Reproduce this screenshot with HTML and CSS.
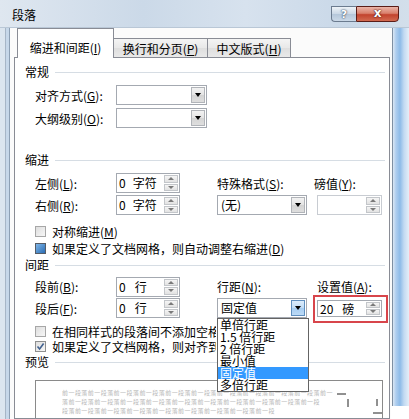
FILE: index.html
```html
<!DOCTYPE html>
<html lang="zh">
<head>
<meta charset="utf-8">
<link rel="stylesheet" href="styles.css">
</head>
<body>
<div class="win">
  <div class="titlebar">
    <span class="title">段落</span>
    <div class="tbtns">
      <span class="help">?</span>
      <span class="close">x</span>
    </div>
  </div>
  <div class="frame">
    <div class="lframe"></div>
    <div class="face">
      <div class="tabs">
        <div class="tab active w1">缩进和间距(<u>I</u>)</div>
        <div class="tab w2">换行和分页(<u>P</u>)</div>
        <div class="tab w3">中文版式(<u>H</u>)</div>
      </div>
      <div class="panel">
        <div class="grp first">常规</div>
        <div class="row r1">
          <span>对齐方式(<u>G</u>):</span>
          <div class="combo"><span class="v"></span><span class="btn"><i></i></span></div>
        </div>
        <div class="row r2">
          <span>大纲级别(<u>O</u>):</span>
          <div class="combo"><span class="v"></span><span class="btn"><i></i></span></div>
        </div>

        <div class="grp g-indent">缩进</div>
        <div class="grid indent">
          <span>左侧(<u>L</u>):</span>
          <div class="spin"><span class="v">0<b>字符</b></span><span class="arr"><em class="up"></em><em class="dn"></em></span></div>
          <span></span>
          <span>特殊格式(<u>S</u>):</span>
          <span></span>
          <span class="lbl-shift">磅值(<u>Y</u>):</span>

          <span>右侧(<u>R</u>):</span>
          <div class="spin"><span class="v">0<b>字符</b></span><span class="arr"><em class="up"></em><em class="dn"></em></span></div>
          <span></span>
          <div class="combo"><span class="v">(无)</span><span class="btn"><i></i></span></div>
          <span></span>
          <div class="spin dis"><span class="v"></span><span class="arr"><em class="up"></em><em class="dn"></em></span></div>
        </div>
        <div class="chk c1"><span class="box dim"></span><span>对称缩进(<u>M</u>)</span></div>
        <div class="chk c2"><span class="box ind"><span></span></span><span>如果定义了文档网格，则自动调整右缩进(<u>D</u>)</span></div>

        <div class="grp g-space">间距</div>
        <div class="grid space">
          <span>段前(<u>B</u>):</span>
          <div class="spin"><span class="v">0<b class="hang">行</b></span><span class="arr"><em class="up"></em><em class="dn"></em></span></div>
          <span></span>
          <span>行距(<u>N</u>):</span>
          <span></span>
          <span>设置值(<u>A</u>):</span>

          <span>段后(<u>F</u>):</span>
          <div class="spin"><span class="v">0<b class="hang">行</b></span><span class="arr"><em class="up"></em><em class="dn"></em></span></div>
          <span></span>
          <div class="combo open">
            <span class="v">固定值</span><span class="btn hot"><i></i></span>
            <ul class="list">
              <li>单倍行距</li>
              <li>1.5 倍行距</li>
              <li>2 倍行距</li>
              <li>最小值</li>
              <li class="sel">固定值</li>
              <li>多倍行距</li>
            </ul>
          </div>
          <span></span>
          <div class="spin small hl"><span class="v">20<b class="pt">磅</b></span><span class="arr"><em class="up"></em><em class="dn"></em></span><span class="mark"></span></div>
        </div>
        <div class="chk c3"><span class="box dim"></span><span class="clip">在相同样式的段落间不添加空格(<u>C</u>)</span></div>
        <div class="chk c4"><span class="box"><svg width="9" height="9" viewBox="0 0 9 9"><path d="M1.5 4.5 L3.6 7 L7.6 1.6" fill="none" stroke="#41618f" stroke-width="1.6"/></svg></span><span class="clip">如果定义了文档网格，则对齐到网格(<u>W</u>)</span></div>

        <div class="grp g-prev">预览</div>
        <div class="preview">
          <p>前一段落前一段落前一段落前一段落前一段落前一段落前一段落前一段落前一段落前一段落前一</p>
          <p>落前一段落前一段落前一段落前一段落前一段落前一段落前一段落前一段落前一段落前一段</p>
          <p>段落前一段落前一段落前一段落前一段落前一段落前一段落前一段落前一段</p>
          <svg class="marks" width="60" height="40" viewBox="0 0 60 40">
            <path d="M1 3 H10 M12 8 V16 M41 8 V15 M37 22 H46" stroke="#222" stroke-width="1" fill="none"/>
          </svg>
        </div>
      </div>
    </div>
    <div class="rframe"><span class="rcut"></span></div>
  </div>
</div>
</body>
</html>
```

FILE: styles.css
```css
* { box-sizing: border-box; margin: 0; padding: 0; }
body {
  width: 409px; height: 419px; overflow: hidden;
  font-family: "Noto Sans CJK SC", "Noto Sans", sans-serif;
  font-size: 12px; color: #000; background: #fff;
}
u { text-decoration: underline; text-underline-offset: 1px; }

.win { width: 409px; height: 419px; display: flex; flex-direction: column; }

.titlebar {
  height: 28px; display: flex; align-items: flex-start;
  background: linear-gradient(90deg, #dfe7f0 0%, #cbd9e8 35%, #d7e2ee 60%, #c9d8e8 85%, #d3dfeb 100%);
  border-bottom: 1px solid #b9c7d6;
}
.title { margin: 8px 0 0 12px; line-height: 14px; font-size: 12px; }
.tbtns { margin-left: auto; margin-top: 6px; margin-right: 10px; display: flex; }
.help {
  width: 25px; height: 16px; border: 1px solid #6b7b8f; border-right: none;
  border-radius: 0 0 0 4px;
  background: linear-gradient(#eef3f8, #cbd8e6 48%, #b5c7da 52%, #cbd9e8);
  display: flex; align-items: center; justify-content: center;
  color: #fff; font: bold 11px/1 "DejaVu Sans", sans-serif;
  text-shadow: 0 0 2px #34465c, 0 0 1px #34465c;
}
.close {
  width: 43px; height: 16px; border: 1px solid #5a1d18;
  border-radius: 0 0 4px 0;
  background: linear-gradient(#ebb5a9, #d9806c 45%, #c2432e 55%, #d26a50);
  display: flex; align-items: center; justify-content: center;
  color: #fff; font: bold 12px/1 "DejaVu Sans", sans-serif;
  text-shadow: 0 0 2px #4a1410, 0 0 1px #4a1410;
  padding-bottom: 2px;
}

.frame { flex: 1; display: flex; min-height: 0; }
.lframe {
  width: 10px;
  background: linear-gradient(90deg, #dbe5ef 0, #dbe5ef 5px, #a6b5c6 5px, #a6b5c6 6px, #c6d7e9 6px, #c6d7e9 9px, #8c9fb4 9px);
}
.face { width: 381px; background: #fbfbfb; padding-left: 4px; display: flex; flex-direction: column; }
.rframe {
  width: 18px; display: flex; flex-direction: column;
  background: linear-gradient(90deg, #fbfbfb 0, #fbfbfb 1px, #7e8fa2 1px, #7e8fa2 2px, #dbe7f3 2px, #aecdee 5px, #8dbbe8 9px, #c2daf2 13px, #e4eef8 18px);
}
.rcut { margin-top: auto; height: 13px; background: #fff; }

.tabs { height: 29px; display: flex; align-items: flex-end; padding-left: 3px; }
.tab {
  height: 19px; padding-top: 3px; line-height: 14px; text-align: center;
  border: 1px solid #898c95; border-bottom: none; margin-left: -1px;
  background: linear-gradient(#f4f4f4, #e8e8e8 50%, #dedede 51%, #e9e9e9);
}
.tab.active {
  height: 30px; margin-bottom: -1px; padding-top: 12px; background: #fff;
  position: relative; z-index: 1; margin-left: 0;
}
.w1 { width: 97px; }
.w2 { width: 95px; }
.w3 { width: 84px; }

.panel {
  width: 376px; flex: 1; border: 1px solid #898c95; background: #fff;
  display: flex; flex-direction: column; padding: 0 4px 0 10px;
}

.grp { display: flex; align-items: center; height: 14px; line-height: 14px; }
.grp::after { content: ""; flex: 1; height: 1px; background: #d6dde4; margin-left: 6px; }
.grp.first { margin-top: 7px; }
.g-indent { margin-top: 25px; }
.g-space { margin-top: 3px; }
.g-prev { margin-top: 2px; }

.row { display: grid; grid-template-columns: 81px 91px; align-items: center; margin-left: 10px; height: 20px; }
.r1 { margin-top: 6px; }
.r2 { margin-top: 3px; }

.grid {
  display: grid; grid-template-columns: 81px 64px 37px 90px 10px 65px;
  row-gap: 2px; align-items: center; margin-left: 10px;
}
.indent { margin-top: 6px; grid-template-rows: 20px 20px; }
.space { margin-top: 5px; grid-template-rows: 19px 20px; }
.lbl-shift { margin-left: -3px; }

.combo {
  position: relative; height: 20px; display: flex; align-items: stretch;
  border: 1px solid #a4a9b1; background: #fff;
}
.combo .v { flex: 1; padding-left: 3px; line-height: 18px; }
.combo .btn {
  width: 14px; margin: 1px 1px 1px 0; border: 1px solid #b1b4b9;
  background: linear-gradient(#f2f2f2, #e4e4e4 50%, #d4d4d4 51%, #dedede);
  display: flex; align-items: center; justify-content: center;
}
.combo .btn i { width: 0; height: 0; border-left: 3px solid transparent; border-right: 3px solid transparent; border-top: 4px solid #000; }
.combo .btn.hot { background: linear-gradient(#dcecfb, #c0dcf6 50%, #a6cdf2 51%, #bcdaf6); border-color: #5f8fbf; }

.list {
  position: absolute; left: -1px; top: 19px; width: 92px; list-style: none;
  background: #fff; border: 1px solid #646464; z-index: 5;
}
.list li { height: 12px; line-height: 12px; padding-left: 2px; white-space: nowrap; }
.list li.sel { background: #3399ff; color: #fff; }

.spin {
  position: relative; height: 20px; display: flex; align-items: stretch;
  border: 1px solid #a4a9b1; background: #fff;
}
.spin .v { flex: 1; padding-left: 2px; line-height: 18px; white-space: nowrap; }
.spin .v b { font-weight: normal; margin-left: 7px; }
.spin .v b.hang { margin-left: 9px; }
.spin .v b.pt { margin-left: 9px; }
.spin.small { height: 17px; }
.spin.small .v { line-height: 15px; }
.spin .arr { width: 14px; margin: 1px 1px 1px 0; display: flex; flex-direction: column; gap: 1px; }
.spin .arr em {
  flex: 1; display: flex; align-items: center; justify-content: center;
  border: 1px solid #c3c6ca; background: linear-gradient(#f5f5f5, #e2e2e2);
}
.spin .arr em::before { content: ""; width: 0; height: 0; border-left: 3px solid transparent; border-right: 3px solid transparent; }
.spin .arr em.up::before { border-bottom: 3px solid #7a7a7a; }
.spin .arr em.dn::before { border-top: 3px solid #7a7a7a; }
.spin.dis { border-color: #c8ccd2; }
.mark {
  position: absolute; left: -5px; top: -6px; width: 75px; height: 28px;
  border: 2px solid #d8454b; pointer-events: none;
}

.chk { display: flex; align-items: center; gap: 6px; height: 14px; margin-left: 10px; }
.chk .clip { width: 164px; overflow: hidden; white-space: nowrap; }
.c1 { margin-top: 9px; }
.c2 { margin-top: 3px; }
.c3 { margin-top: 6px; }
.c4 { margin-top: 1px; }
.box {
  flex: none; width: 11px; height: 11px; border: 1px solid #8e8f8f;
  background: linear-gradient(135deg, #dedede, #f7f7f7);
  display: flex; align-items: center; justify-content: center;
}
.box.dim { border-color: #a7a7a7; }
.box.ind { border-color: #555c66; background: #fff; }
.box.ind span { width: 9px; height: 9px; background: linear-gradient(135deg, #7fb6e8, #2a6cb3); }

.preview {
  position: relative; margin-top: 11px; margin-left: 10px; width: 348px; flex: 1;
  border: 1px solid #8a8a8a; border-bottom: none; background: #fff;
  padding: 7px 0 0 26px;
}
.preview p { font-size: 6px; line-height: 9px; letter-spacing: 0.45px; color: #b8b8b8; white-space: nowrap; overflow: hidden; }
.marks { position: absolute; left: 300px; top: 10px; }
```
